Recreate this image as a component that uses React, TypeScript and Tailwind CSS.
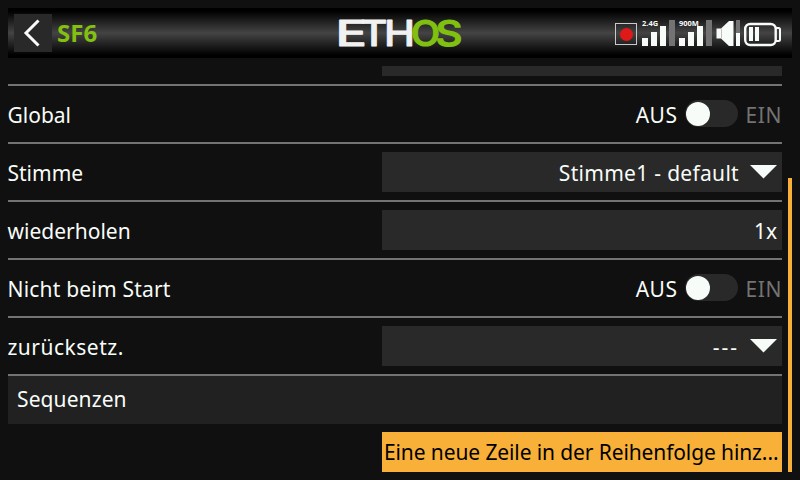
import type { ReactNode } from "react";

function Row({ label, spacing, children }: { label: string; spacing: string; children: ReactNode }) {
  return (
    <div className="flex h-[58px] shrink-0 items-center justify-between border-b-2 border-[#737373]">
      <span className={`-ml-[0.5px] pt-px whitespace-nowrap text-[21px] leading-10 ${spacing}`}>{label}</span>
      {children}
    </div>
  );
}

function Field({ value, spacing, arrow }: { value: string; spacing: string; arrow?: boolean }) {
  return (
    <div className="flex h-10 w-[400px] items-center justify-end bg-[#292929] pr-[5px] text-[21px]">
      <span className={`pt-px whitespace-nowrap leading-10 ${spacing}`}>{value}</span>
      {arrow && (
        <svg className="ml-[11px] block" width="27" height="14" viewBox="0 0 27 14">
          <path d="M0 0H27L13.5 13.5Z" fill="#f8fcf8" />
        </svg>
      )}
    </div>
  );
}

function Toggle() {
  return (
    <div className="flex h-10 items-center text-[21px] leading-10">
      <span className="mr-2 pt-0.5 tracking-[0.5px]">AUS</span>
      <div className="mb-px flex h-[27px] w-[53px] items-center rounded-full bg-[#292929] pl-px">
        <div className="h-6 w-6 rounded-full bg-[#f8fcf8]" />
      </div>
      <span className="ml-[7px] pt-0.5 tracking-[0.6px] text-[#737373]">EIN</span>
    </div>
  );
}

function Signal({ name }: { name: string }) {
  return (
    <svg className="block overflow-visible" width="34" height="28" viewBox="0 0 34 28">
      <path d="M0 19h6v8H0zM9 13h6v14H9zM18 7h6v20h-6z" fill="#f8fcf8" />
      <path d="M27 1h6v26h-6z" fill="#737373" />
      <text x="0" y="7" fontSize="7.5" fontWeight="700" fill="#f8fcf8" fontFamily="Noto Sans, sans-serif">{name}</text>
    </svg>
  );
}

function Logo() {
  return (
    <svg className="absolute left-[329px] top-2.5 overflow-visible" width="126" height="30" viewBox="337 18 126 30" fontFamily="Inter, sans-serif" fontSize="35" fontWeight="500" aria-label="ETHOS">
      <g fill="#f1f1f1" stroke="#f1f1f1" strokeWidth="0.8" strokeLinejoin="round">
        <text x="335.500" y="45.700" textLength="31.500" lengthAdjust="spacingAndGlyphs">E</text>
        <text x="360.500" y="45.700" textLength="27" lengthAdjust="spacingAndGlyphs">T</text>
        <text x="384" y="45.700" textLength="31" lengthAdjust="spacingAndGlyphs">H</text>
      </g>
      <g fill="#80c010" stroke="#80c010" strokeWidth="1.2">
        <text x="411" y="45.700" textLength="29" lengthAdjust="spacingAndGlyphs">O</text>
        <text x="435.500" y="45.700" textLength="27" lengthAdjust="spacingAndGlyphs">S</text>
      </g>
    </svg>
  );
}

export default function App() {
  return (
    <div className="flex h-[480px] w-[800px] flex-col overflow-hidden bg-[#101010] p-2 font-['Noto_Sans',sans-serif] text-[#f8fcf8]">
      <header className="relative flex h-[50px] shrink-0 items-center bg-[linear-gradient(#000_0%,#000_6%,#444_50%,#000_94%,#000_100%)] pl-1.5">
        <button className="flex h-[38px] w-[38px] items-center justify-center bg-[#292929]" aria-label="Zurück">
          <svg width="38" height="38" viewBox="0 0 38 38" fill="none" stroke="#f8fcf8" strokeWidth="3">
            <path d="M24.500 6.500L12 19L24.500 31.500" />
          </svg>
        </button>
        <h1 className="ml-[5px] text-2xl font-bold text-[#84c010]">SF6</h1>
        <Logo />
        <div className="ml-auto flex h-7 items-start pr-2.5">
          <svg className="mr-1" width="23" height="28" viewBox="0 0 23 28">
            <rect x="0.500" y="4.500" width="21" height="21" fill="none" stroke="#c8cac8" />
            <circle cx="11.500" cy="15.500" r="6.500" fill="#e01818" />
          </svg>
          <div className="flex gap-[3px]">
            <Signal name="2.4G" />
            <Signal name="900M" />
          </div>
          <svg className="ml-[3px]" width="25" height="28" viewBox="0 0 25 28">
            <path d="M0.500 9.500H5L13 2H17.500V27H13L5 19.500H0.500Z" fill="#f8fcf8" />
            <path d="M5.500 9.500V19.500" stroke="#c0c0c0" />
            <path d="M20 1h4v13h-4z" fill="#737373" />
            <path d="M20 14h4v13h-4z" fill="#f8fcf8" />
          </svg>
          <svg className="ml-[3px]" width="38" height="28" viewBox="0 0 38 28">
            <rect x="1.200" y="5" width="30.500" height="21" rx="5" fill="none" stroke="#f8fcf8" strokeWidth="2.400" />
            <path d="M32 9h2.500a1.500 1.500 0 0 1 1.500 1.500v10a1.500 1.500 0 0 1 -1.500 1.500h-2.500" fill="none" stroke="#f8fcf8" strokeWidth="2" />
            <path d="M5 8h4v14H5zM11 8h4v14h-4z" fill="#f8fcf8" />
          </svg>
        </div>
      </header>

      <main className="mt-2 flex min-h-0 flex-1 gap-1.5">
        <section className="flex w-[774px] flex-col">
          <div className="flex h-5 shrink-0 justify-end border-b-2 border-[#737373]">
            <div className="h-2.5 w-[400px] bg-[#292929]" />
          </div>
          <Row label="Global" spacing="tracking-[0px]"><Toggle /></Row>
          <Row label="Stimme" spacing="tracking-[0px]"><Field value="Stimme1 - default" spacing="tracking-[0.3px]" arrow /></Row>
          <Row label="wiederholen" spacing="tracking-[0px]"><Field value="1x" spacing="tracking-[0px]" /></Row>
          <Row label="Nicht beim Start" spacing="tracking-[0.2px]"><Toggle /></Row>
          <Row label="zurücksetz." spacing="tracking-[0.5px]"><Field value="---" spacing="tracking-[2px]" arrow /></Row>
          <div className="flex h-12 shrink-0 items-center bg-[#212121] pb-0.5 pl-[9px] text-[21px] leading-10 tracking-[0.1px]">Sequenzen</div>
          <button className="mt-2 h-10 w-[400px] shrink-0 self-end whitespace-nowrap bg-[#f8b038] pl-0.5 text-left text-[21px] leading-10 tracking-[-0.11px] text-black">
            Eine neue Zeile in der Reihenfolge hinz...
          </button>
        </section>
        <div className="mt-28 w-1 bg-[#f8b038]" />
      </main>
    </div>
  );
}
